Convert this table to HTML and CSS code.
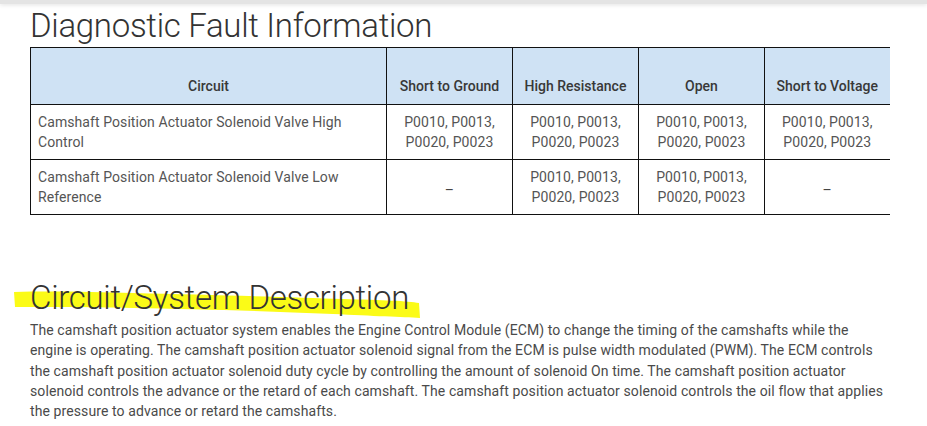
FILE: index.html
```html
<!DOCTYPE html>
<html>
<head>
<meta charset="utf-8">
<link rel="stylesheet" href="styles.css">
</head>
<body>
<div class="topbar"></div>
<main class="page">
  <h1 class="title">Diagnostic Fault Information</h1>
  <table class="faults">
    <colgroup>
      <col class="c-circuit"><col class="c-code"><col class="c-code"><col class="c-code"><col class="c-code-last">
    </colgroup>
    <thead>
      <tr>
        <th>Circuit</th>
        <th>Short to Ground</th>
        <th>High Resistance</th>
        <th>Open</th>
        <th>Short to Voltage</th>
      </tr>
    </thead>
    <tbody>
      <tr>
        <td class="name">Camshaft Position Actuator Solenoid Valve High Control</td>
        <td>P0010, P0013,<br>P0020, P0023</td>
        <td>P0010, P0013,<br>P0020, P0023</td>
        <td>P0010, P0013,<br>P0020, P0023</td>
        <td>P0010, P0013,<br>P0020, P0023</td>
      </tr>
      <tr>
        <td class="name">Camshaft Position Actuator Solenoid Valve Low Reference</td>
        <td><span class="dash">–</span></td>
        <td>P0010, P0013,<br>P0020, P0023</td>
        <td>P0010, P0013,<br>P0020, P0023</td>
        <td><span class="dash">–</span></td>
      </tr>
    </tbody>
  </table>

  <h2 class="title title2">
    <svg class="marker" width="412" height="34" viewBox="0 0 412 34" aria-hidden="true">
      <path d="M1 3 C40 2 80 3 120 4 C200 6 280 8 330 10 C370 11 395 12 406 14 L407 29 C390 28 360 27 320 25 C250 22 180 20 120 19 C70 18 30 18 2 18 Z" fill="#fbfb17"/>
    </svg>
    <span class="title-text">Circuit/System Description</span>
  </h2>
  <p class="desc">The camshaft position actuator system enables the Engine Control Module (ECM) to change the timing of the camshafts while the engine is operating. The camshaft position actuator solenoid signal from the ECM is pulse width modulated (PWM). The ECM controls the camshaft position actuator solenoid duty cycle by controlling the amount of solenoid On time. The camshaft position actuator solenoid controls the advance or the retard of each camshaft. The camshaft position actuator solenoid controls the oil flow that applies the pressure to advance or retard the camshafts.</p>
</main>
</body>
</html>
```
FILE: styles.css
```css
html, body {
  margin: 0;
  padding: 0;
  background: #ffffff;
}
body {
  font-family: Roboto, "Liberation Sans", sans-serif;
  color: #333;
}
.topbar {
  height: 4px;
  background: #e4e4e4;
  box-shadow: 0 1px 4px rgba(0, 0, 0, 0.12);
}
.page {
  width: 859px;
  margin-left: 30px;
}
.title {
  margin: 2px 0 1px 0;
  font-family: "Roboto Light", Roboto, "Liberation Sans", sans-serif;
  font-weight: 300;
  font-size: 33px;
  line-height: 40px;
  color: #333;
  letter-spacing: -0.3px;
}
.faults {
  border-collapse: collapse;
  table-layout: fixed;
  width: 859px;
  font-size: 14px;
  line-height: 20px;
}
.c-circuit { width: 356px; }
.c-code { width: 126px; }
.c-code-last { width: 125px; }
.faults th {
  background: #cfe2f4;
  font-weight: 500;
  color: #383838;
  vertical-align: bottom;
  padding: 8px 4px 8px 4px;
  height: 40px;
  border-top: 1px solid #111;
  border-bottom: 1px solid #111;
  border-left: 1px solid #111;
  text-align: center;
}
.faults td {
  color: #555;
  text-align: center;
  vertical-align: middle;
  padding: 7px 4px;
  letter-spacing: 0.08px;
  border-bottom: 1px solid #111;
  border-left: 1px solid #111;
}
.faults td.name {
  text-align: left;
  padding-left: 7px;
}
.dash {
  position: relative;
  top: 3px;
  color: #444;
}
.title2 {
  position: relative;
  margin-top: 63px;
  margin-bottom: 0;
}
.title-text {
  position: relative;
  z-index: 1;
}
.marker {
  position: absolute;
  left: -17px;
  top: 11px;
  z-index: 0;
}
.desc {
  margin: 2px 0 0 0;
  font-size: 14px;
  line-height: 20.3px;
  letter-spacing: 0.1px;
  color: #4a4a4a;
}
```
